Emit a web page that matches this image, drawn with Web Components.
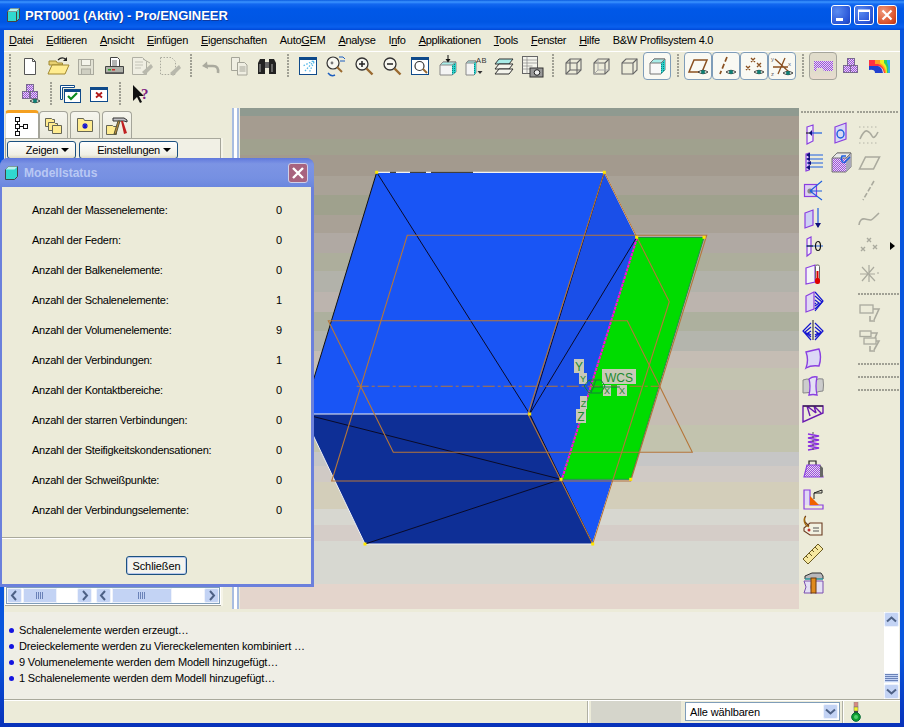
<!DOCTYPE html>
<html>
<head>
<meta charset="utf-8">
<title>Pro/ENGINEER</title>
<style>
  html, body { margin: 0; padding: 0; background: #ecebd9; }
  body { font: 11px "Liberation Sans", Arial, sans-serif; color: #000; }
</style>
</head>
<body>
<xp-window>
  <app-menubar>
    <menu-item><u>D</u>atei</menu-item>
    <menu-item><u>E</u>ditieren</menu-item>
    <menu-item><u>A</u>nsicht</menu-item>
    <menu-item><u>E</u>infügen</menu-item>
    <menu-item><u>E</u>igenschaften</menu-item>
    <menu-item>Auto<u>G</u>EM</menu-item>
    <menu-item><u>A</u>nalyse</menu-item>
    <menu-item>I<u>n</u>fo</menu-item>
    <menu-item><u>A</u>pplikationen</menu-item>
    <menu-item><u>T</u>ools</menu-item>
    <menu-item><u>F</u>enster</menu-item>
    <menu-item><u>H</u>ilfe</menu-item>
    <menu-item>B&amp;W Profilsystem 4.0</menu-item>
  </app-menubar>
  <tool-area>
    <tool-row>
      <tool-grip></tool-grip>
      <tool-btn icon="new"></tool-btn><tool-btn icon="open"></tool-btn><tool-btn icon="save"></tool-btn><tool-btn icon="print"></tool-btn><tool-btn icon="dis1"></tool-btn><tool-btn icon="dis2"></tool-btn>
      <tool-grip></tool-grip>
      <tool-btn icon="undo"></tool-btn><tool-btn icon="copy"></tool-btn><tool-btn icon="binoc"></tool-btn>
      <tool-grip></tool-grip>
      <tool-btn icon="repaint"></tool-btn><tool-btn icon="orient"></tool-btn><tool-btn icon="zoomin"></tool-btn><tool-btn icon="zoomout"></tool-btn><tool-btn icon="refit"></tool-btn><tool-btn icon="boxarrow"></tool-btn><tool-btn icon="boxab"></tool-btn><tool-btn icon="layers"></tool-btn><tool-btn icon="camera"></tool-btn>
      <tool-grip></tool-grip>
      <tool-btn icon="wire1"></tool-btn><tool-btn icon="wire2"></tool-btn><tool-btn icon="wire3"></tool-btn><tool-btn icon="shade" state="on"></tool-btn>
      <tool-grip></tool-grip>
      <tool-btn icon="planeeye" state="on"></tool-btn><tool-btn icon="axiseye" state="on"></tool-btn><tool-btn icon="pointeye" state="on"></tool-btn><tool-btn icon="csyseye" state="on"></tool-btn>
      <tool-grip></tool-grip>
      <tool-btn icon="mech" state="down"></tool-btn><tool-btn icon="blocks"></tool-btn><tool-btn icon="fringe"></tool-btn>
    </tool-row>
    <tool-row>
      <tool-grip></tool-grip>
      <tool-btn icon="blockseye"></tool-btn>
      <tool-grip></tool-grip>
      <tool-btn icon="wincheck"></tool-btn><tool-btn icon="winx"></tool-btn>
      <tool-grip></tool-grip>
      <tool-btn icon="whatsthis"></tool-btn>
    </tool-row>
  </tool-area>
  <main-row>
    <model-tree></model-tree>
    <pane-splitter></pane-splitter>
    <model-canvas></model-canvas>
    <side-tools></side-tools>
  </main-row>
  <message-log>
    <log-line>Schalenelemente werden erzeugt…</log-line>
    <log-line>Dreieckelemente werden zu Viereckelementen kombiniert …</log-line>
    <log-line>9 Volumenelemente werden dem Modell hinzugefügt…</log-line>
    <log-line>1 Schalenelemente werden dem Modell hinzugefügt…</log-line>
  </message-log>
  <status-bar></status-bar>
  <model-status slot="over" title-text="Modellstatus">
    <status-row label="Anzahl der Massenelemente:" value="0"></status-row>
    <status-row label="Anzahl der Federn:" value="0"></status-row>
    <status-row label="Anzahl der Balkenelemente:" value="0"></status-row>
    <status-row label="Anzahl der Schalenelemente:" value="1"></status-row>
    <status-row label="Anzahl der Volumenelemente:" value="9"></status-row>
    <status-row label="Anzahl der Verbindungen:" value="1"></status-row>
    <status-row label="Anzahl der Kontaktbereiche:" value="0"></status-row>
    <status-row label="Anzahl der starren Verbindungen:" value="0"></status-row>
    <status-row label="Anzahl der Steifigkeitskondensationen:" value="0"></status-row>
    <status-row label="Anzahl der Schweißpunkte:" value="0"></status-row>
    <status-row label="Anzahl der Verbindungselemente:" value="0"></status-row>
  </model-status>
</xp-window>

<script>
// shared bits for the little icons
const DEFS = `<defs>
  <pattern id="pd" width="2" height="2" patternUnits="userSpaceOnUse"><rect width="2" height="2" fill="#e6d8f4"/><rect width="1" height="1" fill="#9b4fd8"/><rect x="1" y="1" width="1" height="1" fill="#9b4fd8"/></pattern>
  <pattern id="td" width="2" height="2" patternUnits="userSpaceOnUse"><rect width="2" height="2" fill="#2fd0c8"/><rect width="1" height="1" fill="#0a7f80"/></pattern>
</defs>`;
const eye = (x, y) => `<g transform="translate(${x} ${y})"><path d="M-5 0Q0-3.5 5 0Q0 3.5-5 0z" fill="#dfe8e0" stroke="#222" stroke-width=".8"/><circle r="2" fill="#0d7d72"/></g>`;
const pblock = (x, y) => `<rect x="${x}" y="${y}" width="7" height="7" fill="url(#pd)" stroke="#7a6a90"/>`;
const mag = (c) => `<circle cx="10" cy="10" r="6" fill="#f7f7f0" stroke="#333" stroke-width="1.3"/>${c}<path d="M14.5 14.5l6 6" stroke="#9a6a30" stroke-width="2.4"/>`;
const winf = (x, y, w, h) => `<rect x="${x}" y="${y}" width="${w}" height="${h}" fill="#fff" stroke="#0f4a8a"/><rect x="${x}" y="${y}" width="${w}" height="2.5" fill="#0f4a8a"/>`;
const wire = (b) => `<path d="M5 9l4-4h11v11l-4 4H5z" fill="none" stroke="#666" stroke-width="1.1"/><path d="M5 9h11v11M16 9l4-4" fill="none" stroke="#666" stroke-width="1.1"/>${b}`;
const gr = `fill="none" stroke="#aaaa9e" stroke-width="1.6"`;

const ICONS = {
  new: `<path d="M6.5 4.500h8l3 3v13h-11z" fill="#fff" stroke="#555"/><path d="M14.500 4.500v3h3" fill="none" stroke="#555"/>`,
  open: `<path d="M3 11V7h7l1.500 2h5v2z" fill="#e8d070" stroke="#a08830"/><path d="M2 20l4-9h17l-4 9z" fill="#ffec90" stroke="#a08830"/><path d="M12 6q4-4 8-.5" fill="none" stroke="#222" stroke-width="1.200"/><path d="M21 3v4h-4z" fill="#222"/>`,
  save: `<rect x="4.500" y="5.500" width="15" height="15" fill="#e2e2d4" stroke="#aaaa9e"/><rect x="7.500" y="5.500" width="9" height="6" fill="#f4f4ea" stroke="#aaaa9e"/><rect x="7.500" y="15" width="9" height="5.500" fill="#cfcfc2" stroke="#aaaa9e"/>`,
  print: `<path d="M8.500 3.500h7l2 2v8h-9z" fill="#fff" stroke="#444"/><path d="M10 7h5M10 9h5M10 11h5" stroke="#666"/><path d="M3.500 12.500h18v7h-18z" fill="#aeb0a8" stroke="#444"/><rect x="6" y="15" width="3" height="1.500" fill="#2aa02a"/><rect x="10" y="15" width="3" height="1.500" fill="#d02a2a"/><rect x="4" y="18" width="17" height="1.500" fill="#666"/>`,
  dis1: `<path d="M2.500 3.500h10l4 4v13h-14z" fill="#efeee2" stroke="#b0b0a4"/><path d="M5 8h8M5 11h8M5 14h6" stroke="#c4c4b8"/><path d="M12 18l9-8 2 3-8 8z" fill="#b8b8ac"/><path d="M13 5l7 4" stroke="#b0b0a4"/>`,
  dis2: `<path d="M2.500 3.500h11l4 4v13h-15z" fill="none" stroke="#aaaa9e" stroke-dasharray="1.500 1.500"/><path d="M12 19l9-8 2 3-8 8z" fill="#b8b8ac"/>`,
  undo: `<path d="M8 7.500l-5 4.500 6 3z" fill="#aaaa9e"/><path d="M6 12h8q6 0 5 7" fill="none" stroke="#aaaa9e" stroke-width="2.600"/>`,
  copy: `<path d="M4.500 3.500h8v13h-8z" fill="#efeee2" stroke="#a5a599"/><path d="M10.500 8.500h7l2.500 2.500v10h-9.500z" fill="#efeee2" stroke="#a5a599"/><path d="M12.500 13h6M12.500 15h6M12.500 17h6" stroke="#a5a599"/>`,
  binoc: `<path d="M3 20V9l2-4h5v15zM14 20V5h5l2 4v11z" fill="#222"/><rect x="10" y="8" width="4" height="6" fill="#666"/><path d="M5 10v8M17 10v8" stroke="#aaa"/>`,
  repaint: `<rect x="3.500" y="3.500" width="17" height="17" fill="#fff" stroke="#0f4a8a"/><rect x="3.500" y="3.500" width="17" height="2.500" fill="#0f4a8a"/><path d="M18 7L9 17M18 8l-5 11M17 7L7 12" stroke="#55b8e8" stroke-width="1.300" stroke-dasharray="1.500 1.500"/>`,
  orient: `<circle cx="9" cy="9" r="6" fill="#f7f7f0" stroke="#333" stroke-width="1.200"/><path d="M13 13l5 5" stroke="#9a6a30" stroke-width="2"/><path d="M4 19q3 4 7 2" fill="none" stroke="#1d5fc0" stroke-width="1.400"/><path d="M15 3q5-1 6 2M16 7h5" fill="none" stroke="#1d5fc0"/><circle cx="8" cy="9" r="1.400" fill="#777"/>`,
  zoomin: mag(`<path d="M7 10h6M10 7v6" stroke="#222" stroke-width="1.500"/>`),
  zoomout: mag(`<path d="M7 10h6" stroke="#222" stroke-width="1.500"/>`),
  refit: `<rect x="3.500" y="3.500" width="17" height="17" fill="#fff" stroke="#0f4a8a"/><rect x="3.500" y="3.500" width="17" height="2.500" fill="#0f4a8a"/><circle cx="11.500" cy="12" r="4.500" fill="#fff" stroke="#333" stroke-width="1.200"/><path d="M15 15l4 4" stroke="#9a6a30" stroke-width="2"/>`,
  boxarrow: `<path d="M4 11l3-3h13v10l-4 3H4z" fill="#f4f4f4" stroke="#888"/><path d="M16 11v10l4-3V8z" fill="url(#td)"/><path d="M4 11l3-3h13l-4 3z" fill="#a8ece8" stroke="#888"/><path d="M12 1v6" stroke="#111"/><path d="M9.500 5h5L12 8.500z" fill="#111"/>`,
  boxab: `<path d="M2 9l2-2h8v12l-2 2H2z" fill="#f4f4f4" stroke="#888"/><path d="M10 9l2-2v12l-2 2z" fill="url(#td)"/><path d="M2 9l2-2h8l-2 2z" fill="#a8ece8" stroke="#888"/><text x="12" y="8.500" font-family="Liberation Sans" font-size="7.500" letter-spacing=".5" fill="#333">AB</text><path d="M13.500 17h5l-2.500 3z" fill="#333"/>`,
  layers: `<path d="M7 5h14l-4 5H3z" fill="#a8ece8" stroke="#333"/><path d="M7 10h14l-4 5H3z" fill="#f4f4ec" stroke="#333"/><path d="M7 15h14l-4 5H3z" fill="#f4f4ec" stroke="#333"/>`,
  camera: `<rect x="2.500" y="2.500" width="15" height="17" fill="#f4f4ec" stroke="#666"/><path d="M2.500 6h15M2.500 9h15M2.500 12h10M2.500 15h8M7 2.500v17" stroke="#888" stroke-width=".7"/><rect x="10" y="14" width="13" height="9" fill="#999" stroke="#333"/><circle cx="17" cy="18.500" r="2.800" fill="#eee" stroke="#222"/>`,
  wire1: wire(`<path d="M9 5v11H20M9 16l-4 4" fill="none" stroke="#666" stroke-width="1.100"/>`),
  wire2: wire(`<path d="M9 5v11H20M9 16l-4 4" fill="none" stroke="#aaa" stroke-width="1"/>`),
  wire3: wire(``),
  shade: `<path d="M5 9l4-4h11v11l-4 4H5z" fill="#f8f8f8" stroke="#777"/><path d="M16 9v11l4-4V5z" fill="url(#td)"/><path d="M5 9l4-4h11l-4 4z" fill="#a8ece8" stroke="#777"/>`,
  planeeye: `<path d="M3 18L8 6h13l-5 12z" fill="none" stroke="#8a5020" stroke-width="1.500"/>${eye(17,18)}`,
  axiseye: `<path d="M13 3l-7 17" stroke="#8a5020" stroke-width="1.700" stroke-dasharray="5 2.500"/>${eye(17,18)}`,
  pointeye: `<path d="M9 4l4 4m0-4l-4 4M15 9l4 4m0-4l-4 4M4 12l4 4m0-4l-4 4" stroke="#8a5020" stroke-width="1.300"/>${eye(17,18)}`,
  csyseye: `<path d="M5 5l14 13M15 4L8 20M3 13h15" stroke="#8a5020" stroke-width="1.300"/><text x="1" y="7" font-size="6" font-family="Liberation Sans" fill="#666">y</text><text x="1" y="22" font-size="6" font-family="Liberation Sans" fill="#666">z</text><text x="18" y="12" font-size="6" font-family="Liberation Sans" fill="#666">x</text>${eye(18,19)}`,
  mech: `<path d="M3 7h19v10h-9l-2-3H6l-1 3H3z" fill="url(#pd)"/>`,
  blocks: `${pblock(8.500,4.500)}${pblock(4.500,11.500)}${pblock(11.500,11.500)}`,
  fringe: `<path d="M2 6h21v13h-6q-1-6-6-7H2z" fill="#ff3040"/><path d="M8 6h15v13h-5q-1-7-7-9H8z" fill="#ffa020"/><path d="M13 6h10v13h-4q0-7-6-10z" fill="#f0f020"/><path d="M17 6h6v13h-3q0-8-3-10z" fill="#30d060"/><path d="M20 6h3v13h-2q1-8-1-10z" fill="#30b0f0"/><path d="M2 12h9q4 1 5 7H8q0-4-6-3z" fill="#2040d0"/>`,
  blockseye: `${pblock(8.500,2.500)}${pblock(4.500,9.500)}${pblock(12.500,9.500)}${eye(17,19)}`,
  wincheck: `<path d="M1.500 3.500h14v2h-12v12h-2z" fill="#fff" stroke="#0f4a8a"/>${winf(5.500,7.500,16,13)}<path d="M9 14l3 3 6-6" fill="none" stroke="#0d8a20" stroke-width="2.200"/>`,
  winx: `${winf(3.500,5.500,17,14)}<path d="M9 10.500l6 5m0-5l-6 5" stroke="#b01818" stroke-width="1.800"/>`,
  whatsthis: `<path d="M5 3v16l4-4 3 6 2-1-3-6h5z" fill="#111"/><text x="13" y="17" font-family="Liberation Serif" font-weight="700" font-size="15" fill="#7d1a80">?</text>`,

  // left column of the right hand bar
  load: `<path d="M6 5l6-2v16l-6 3z" fill="#f0eef6" stroke="#8a3fe0" stroke-width="1.200"/><path d="M9 11h12" stroke="#1d5fe0" stroke-width="1.200"/><path d="M5 11h5" stroke="#111"/><path d="M11 8v6l-3-3z" fill="#10107a"/>`,
  bearing: `<path d="M6 5l11-4v16L6 21z" fill="#d8d8f4" stroke="#8a3fe0" stroke-width="1.200"/><ellipse cx="11.500" cy="12" rx="3.500" ry="4" fill="none" stroke="#1d5fe0" stroke-width="1.400"/>`,
  pressure: `<path d="M5 4l3-1v17l-3 1z" fill="#e0d8f4" stroke="#8a3fe0" stroke-width="1.200"/><path d="M6 5h16M6 9h16M6 13h16M6 17h16" stroke="#1d5fe0"/><path d="M9 2.500v5L5 5zM9 7v4l-4-2zM10 11v4l-4-2zM9 15v5l-4-2.500z" fill="#10107a"/>`,
  cubehole: `<path d="M3 8l5-5h14v14l-5 5H3z" fill="url(#pd)" stroke="#777"/><path d="M17 8v14l5-5V3z" fill="#a8a8b8"/><path d="M3 8l5-5h14l-5 5z" fill="#e8e8e8" stroke="#777"/><path d="M17 6h-4a2.500 4 0 1 0 4 5l4-4" fill="none" stroke="#1d5fe0" stroke-width="1.500"/>`,
  cone: `<rect x="3.500" y="6.500" width="12" height="12" fill="#ddd0f0" stroke="#8a3fe0" stroke-width="1.200"/><circle cx="9" cy="13" r="2.600" fill="#888"/><path d="M9 13L21 3M9 13l12 9M9 13h12" stroke="#1d5fe0" stroke-width="1.100"/>`,
  accel: `<path d="M4 7l8-3v15l-8 3z" fill="#cdd0f4" stroke="#8a3fe0" stroke-width="1.200"/><path d="M17 2v19" stroke="#1d5fe0" stroke-width="1.200"/><path d="M14 17h6l-3 5z" fill="#10107a"/>`,
  theta: `<path d="M6 5l4-2v16l-4 3z" fill="#f0eef6" stroke="#8a3fe0" stroke-width="1.200"/><path d="M5 12h17" stroke="#1d5fe0"/><path d="M6 12h6" stroke="#111"/><ellipse cx="17" cy="12" rx="2.500" ry="4.500" fill="none" stroke="#111" stroke-width="1.200"/>`,
  thermo: `<path d="M5 6l9-3v17l-9 2z" fill="#f4f4f8" stroke="#8a3fe0" stroke-width="1.200"/><rect x="14.500" y="3" width="4" height="15" rx="1.500" fill="#fff" stroke="#666"/><rect x="15.500" y="9" width="2" height="9" fill="#d00"/><rect x="14" y="16" width="5" height="6" rx="2" fill="#d00"/>`,
  hatch: `<path d="M5 6l8-4v17l-8 3z" fill="#e0d8f4" stroke="#8a3fe0" stroke-width="1.200"/><path d="M14 2l8 9-8 10" fill="none" stroke="#1414d0" stroke-width="1.200"/><path d="M14 6l7 6-7 7M14 10l4 3-4 3M14 13l1 1" fill="none" stroke="#1414d0" stroke-width="1.200"/>`,
  hatch2: `<path d="M12 2v20" stroke="#222"/><path d="M10 5L2 13l8 9M10 9l-6 5 6 5M10 13l-3 2 3 2" fill="none" stroke="#1414d0" stroke-width="1.200"/><path d="M14 5l8 8-8 9M14 9l6 5-6 5M14 13l3 2-3 2" fill="none" stroke="#1414d0" stroke-width="1.200"/>`,
  surf: `<path d="M5 6q8-2 13-3 3 8 0 17-8-1-13 2 3-8 0-16z" fill="#dcd8f6" stroke="#8a3fe0" stroke-width="1.400"/>`,
  surfs: `<path d="M14 6q4-2 8-1 1 6 0 12-4 0-8 2z" fill="#ccc" stroke="#888"/><path d="M2 6q4-2 8 0 1 6 0 12-4 1-8 1z" fill="#ccc" stroke="#888"/><path d="M8 5q4-3 8-2-2 9 0 18-4-1-8 0 2-9 0-16z" fill="#e4e0f4" stroke="#8a3fe0" stroke-width="1.300"/>`,
  truss: `<path d="M2 4h20v7L2 20zM6 4l3 10M6 4l9 7M13 4l2 7M13 4l7 7" fill="none" stroke="#6a1ab0" stroke-width="1.400"/><path d="M2 4h20" stroke="#222"/>`,
  spring: `<path d="M7 4l11 2-11 2 11 2-11 2 11 2-11 2 11 2-11 2" fill="none" stroke="#8a2fe0" stroke-width="1.400"/><path d="M12 2v20" stroke="#555" stroke-dasharray="2 2"/>`,
  weight: `<path d="M8 7V3h7v4" fill="none" stroke="#222" stroke-width="1.200"/><path d="M6 7h13l3 12H3z" fill="url(#pd)" stroke="#8a3fe0" stroke-width="1.200"/><path d="M19 7l3 3v9h-3z" fill="#666"/>`,
  weld: `<rect x="3" y="4" width="6" height="15" fill="#e0d8f4"/><path d="M3 4h6v15h13v4H3z" fill="none" stroke="#8a3fe0" stroke-width="1.200"/><path d="M9 19v-9l9 9z" fill="#f06000"/><path d="M13 13V7l8-3v3h-8" fill="none" stroke="#222"/>`,
  tag: `<path d="M8 12L4 8q-1-5 1-6M21 9v12H9l-6-4v-3l6-5z" fill="#f2f2e2" stroke="#6a3a20" stroke-width="1.100"/><path d="M4 3q-2 4 1 8l3 2" fill="none" stroke="#a06a10" stroke-width="1.400"/><circle cx="8" cy="16" r="1.500" fill="#c03030"/><path d="M12 14h6M12 17h6" stroke="#555"/>`,
  ruler: `<path d="M2 17L17 2l5 5L7 22z" fill="#f6e8a0" stroke="#6a5a20"/><path d="M5 14l2 2M8 11l3 3M11 8l2 2M14 5l3 3" stroke="#6a5a20"/>`,
  hammer: `<path d="M3 11h8l-1 6 1 6H3l2-6zM14 11h8v12h-8z" fill="#e4e0f4" stroke="#7a4fb0"/><path d="M4 6l7-3h9l2 3v3H4z" fill="#b8b8bc" stroke="#333"/><path d="M4 9h18" stroke="#20c0d0"/><rect x="10" y="8" width="5" height="15" fill="#e08a20" stroke="#6a3a10"/>`,

  // greyed out column
  gcurve: `<path d="M3 17q4-9 7-8t5 5 6-4" ${gr}/><path d="M2 5h20M2 21h20" fill="none" stroke="#b4b4a8" stroke-dasharray="1.500 2.500"/>`,
  gplane: `<path d="M2.500 19l6-12h14l-6 12z" ${gr}/>`,
  gline: `<path d="M17 3L6 22" ${gr} stroke-dasharray="5 2"/>`,
  gspline: `<path d="M2 19q1-7 6-6t6 1 8-7" ${gr}/>`,
  gpoints: `<path d="M10 4l4 4m0-4l-4 4M16 11l4 4m0-4l-4 4M4 13l4 4m0-4l-4 4" fill="none" stroke="#aaaa9e" stroke-width="1.400"/>`,
  gstar: `<path d="M5 5l13 14M5 19L17 5M3 12h15M12 3v17" fill="none" stroke="#aaaa9e" stroke-width="1.200"/><path d="M21 10v2" stroke="#aaaa9e"/>`,
  grect: `<rect x="3" y="4" width="13" height="8" fill="none" stroke="#aaaa9e" stroke-width="1.300"/><path d="M16 8h6l-5 11" ${gr}/><path d="M13 15v5h5" ${gr}/>`,
  grect2: `<rect x="3" y="2" width="11" height="5.500" fill="none" stroke="#aaaa9e" stroke-width="1.300"/><rect x="7" y="9" width="12" height="6" fill="none" stroke="#aaaa9e" stroke-width="1.300"/><path d="M14 4h6l-2 5M19 12h3l-5 9" ${gr}/><path d="M13 17v5h5" ${gr}/>`
};

// all elements just render a string into an open shadow root
class Shadowed extends HTMLElement {
  constructor() {
    super();
    this.attachShadow({mode: 'open'});
  }
  connectedCallback() {
    this.shadowRoot.innerHTML = this.render();
  }
  render() { return '<slot></slot>'; }
}

class XpWindow extends Shadowed {
  render() {
    return `
      <style>
        :host { display: block; position: relative; width: 904px; height: 727px; overflow: hidden; }
        .frame { height: 100%; box-sizing: border-box; display: flex; flex-direction: column;
          background: linear-gradient(#0855dd, #0855dd 90%, #0831b9); padding: 0 4px 4px 4px; }
        .title { height: 30px; margin: 0 -4px; flex: none; display: flex; align-items: center; padding: 0 7px; box-sizing: border-box;
          background: linear-gradient(#0a5be0 0, #3b94ff 2px, #1368f0 4px, #0058e8 9px, #0056e4 22px, #0a60ee 27px, #0048d8 30px);
          color: #fff; font: bold 13px "Liberation Sans", Arial, sans-serif; }
        .title svg { flex: none; margin-right: 5px; }
        .caption { flex: 1; text-shadow: 1px 1px 0 #0f3aa0; letter-spacing: -.03px; }
        .ctl { width: 20px; height: 20px; margin-left: 3px; box-sizing: border-box; border: 1px solid #fff; border-radius: 3px;
          background: radial-gradient(circle at 30% 30%, #5b8cf0, #2a56d8 70%, #1c3fb0); position: relative; }
        .ctl.close { background: radial-gradient(circle at 30% 30%, #f09a7c, #d84f28 70%, #b83010); }
        .content { flex: 1; min-height: 0; display: flex; flex-direction: column; background: #ecebd9; }
      </style>
      <div class="frame">
        <div class="title">
          <svg width="13" height="14" viewBox="0 0 13 14"><path d="M.5 3.500l3-3h9v10l-3 3h-9z" fill="#30d8d0" stroke="#444"/><path d="M.5 3.500h9v10M9.500 3.500l3-3" fill="none" stroke="#444"/><path d="M.5 3.500l3-3h9l-3 3z" fill="#b8f4f0"/></svg>
          <span class="caption">PRT0001 (Aktiv) - Pro/ENGINEER</span>
          <div class="ctl"><svg width="18" height="18" viewBox="0 0 18 18"><rect x="4" y="12" width="7" height="3" fill="#fff"/></svg></div>
          <div class="ctl"><svg width="18" height="18" viewBox="0 0 18 18"><path d="M3.500 5h11v9.500h-11z" fill="none" stroke="#fff"/><rect x="3" y="3.500" width="12" height="2.500" fill="#fff"/></svg></div>
          <div class="ctl close"><svg width="18" height="18" viewBox="0 0 18 18"><path d="M4.500 4.500l9 9m0-9l-9 9" stroke="#fff" stroke-width="2.200"/></svg></div>
        </div>
        <div class="content"><slot></slot></div>
      </div>
      <slot name="over"></slot>`;
  }
}

class AppMenubar extends Shadowed {
  render() {
    return `<style>
      :host { display: flex; flex: none; height: 22px; box-sizing: border-box; align-items: center; gap: 13px; padding: 0 0 1px 5px;
        border-bottom: 1px solid #fff; background: #ecebd9; }
      </style><slot></slot>`;
  }
}

class MenuItem extends Shadowed {
  render() {
    return `<style>:host { display: block; font: 11px "Liberation Sans", Arial, sans-serif; letter-spacing: -.3px; white-space: nowrap; }</style><slot></slot>`;
  }
}

class ToolArea extends Shadowed {
  render() {
    return `<style>:host { display: block; flex: none; height: 56px; background: #ecebd9; }</style><slot></slot>`;
  }
}

class ToolRow extends Shadowed {
  render() {
    return `<style>:host { display: flex; height: 28px; align-items: center; }</style><slot></slot>`;
  }
}

class ToolGrip extends Shadowed {
  render() {
    return `<style>
      :host { display: flex; flex: none; width: 13px; height: 28px; justify-content: center; align-items: center; }
      :host(:first-child) { width: 12px; }
      i { display: block; width: 2px; height: 24px; background: repeating-linear-gradient(#a0a094 0 2px, transparent 2px 3px); }
      </style><i></i>`;
  }
}

class ToolBtn extends Shadowed {
  render() {
    const body = ICONS[this.getAttribute('icon')] || '';
    return `<style>
      :host { display: flex; flex: none; width: 28px; height: 28px; box-sizing: border-box; align-items: center; justify-content: center; }
      :host([state="on"]) { border: 1px solid #7f9db9; border-radius: 4px; background: #f9f9f3; }
      :host([state="down"]) { border: 1px solid #a5a59b; border-radius: 4px; background: linear-gradient(#e0dccb 70%, #eadcd0); }
      svg { display: block; }
      </style><svg width="24" height="24" viewBox="0 0 24 24">${DEFS}${body}</svg>`;
  }
}

class MainRow extends Shadowed {
  render() {
    return `<style>:host { display: flex; flex: none; height: 501px; margin-bottom: 3px; }</style><slot></slot>`;
  }
}

class ModelTree extends Shadowed {
  render() {
    return `<style>
      :host { display: flex; flex-direction: column; flex: none; width: 228px; box-sizing: border-box; padding: 2px 11px 3px 1px; }
      .tabs { display: flex; height: 28px; flex: none; align-items: flex-end; }
      .tab { width: 30px; height: 27px; margin-right: 2px; box-sizing: border-box; border: 1px solid #a5a59a; border-bottom: 0; border-radius: 4px 4px 0 0;
        background: linear-gradient(#f6f6ee, #e9e8da); display: flex; align-items: center; justify-content: center; }
      .tab.on { width: 34px; height: 28px; margin-right: 0; background: #fff; border-top: 3px solid #f4a020; border-left-color: #d8d8d0; }
      .tab.on + .tab { width: 29px; }
      .box { flex: 1; min-height: 0; display: flex; flex-direction: column; justify-content: space-between; border: 1px solid #a5a59a; border-top-color: #a8a89c;
        background: #f1f0e5; padding: 2px 0 1px; box-shadow: 2px 0 0 #f5f4e8; }
      .btns { display: flex; gap: 3px; padding-left: 1px; }
      .btn { height: 18px; box-sizing: border-box; border: 1px solid #1c5180; border-radius: 3px; display: flex; align-items: center; justify-content: flex-end; gap: 3px; padding-right: 6px;
        background: linear-gradient(#fff, #f0efe4 80%, #dcd8c4); letter-spacing: -.25px; }
      .btn i { width: 0; height: 0; border: 4px solid transparent; border-top: 4px solid #000; border-bottom: 0; }
      .scrolls { display: flex; border: 1px solid #7f9db9; outline: 1px solid #fff; gap: 4px; background: #fff; }
      .scrolls b { width: 1px; background: #1c5180; margin-left: -3px; }
      </style>
      <div class="tabs">
        <div class="tab on"><svg width="16" height="20" viewBox="0 0 16 20"><g fill="#fff" stroke="#111"><rect x="1.500" y="1.500" width="4" height="4"/><rect x="1.500" y="8.500" width="4" height="4"/><rect x="9.500" y="8.500" width="4" height="4"/><rect x="1.500" y="15.500" width="4" height="4"/></g><path d="M3.500 5.500v3M3.500 12.500v3M5.500 10.500h4" stroke="#111"/></svg></div>
        <div class="tab"><svg width="20" height="20" viewBox="0 0 20 20"><g fill="#ffec90" stroke="#665"><path d="M1.500 3.500h6l1 1h2v7h-9z"/><path d="M4.500 7.500h6l1 1h2v7h-9z"/><path d="M8.500 10.500h9v8h-9z"/></g></svg></div>
        <div class="tab"><svg width="18" height="18" viewBox="0 0 18 18"><path d="M1.500 2.500h6l1 2h8v11h-15z" fill="#ffec90" stroke="#665"/><path d="M9 7v6M6 10h6M7 8l4 4m0-4l-4 4" stroke="#1414d0" stroke-width="1.200"/></svg></div>
        <div class="tab"><svg width="24" height="24" viewBox="0 0 24 24"><path d="M1.500 12.500h6l1 1h3v8h-10z" fill="#ffec90" stroke="#665"/><path d="M8 5h11l3 2v2l-3-1H8z" fill="#c0c0c4" stroke="#333"/><path d="M13 8h2l-4 13h-2z" fill="#c08a40" stroke="#553"/><path d="M16 8h2l4 12-3 1z" fill="#c02020"/></svg></div>
      </div>
      <div class="box">
        <div class="btns">
          <div class="btn" style="width:69px"><span>Zeigen</span><i></i></div>
          <div class="btn" style="width:99px"><span>Einstellungen</span><i></i></div>
        </div>
        <div class="scrolls">
          <h-scroll style="width:85px" thumb="34" rest="16"></h-scroll>
          <h-scroll style="width:123px" thumb="60" rest="31"></h-scroll>
        </div>
      </div>`;
  }
}

class PaneSplitter extends Shadowed {
  render() {
    return `<style>
      :host { display: block; flex: none; width: 8px;
        background: linear-gradient(90deg, #a8bde0 0 2px, #fff 2px 5px, #a8bde0 5px 7px, #ecebd9 7px); }
      </style>`;
  }
}

const chevron = (d) => {
  const p = { l: 'M9 3L5 7.500 9 12', r: 'M6 3l4 4.500L6 12', u: 'M3 9.500l4.500-4 4.500 4', d: 'M3 5.500l4.500 4 4.500-4' }[d];
  return `<svg width="15" height="15" viewBox="0 0 15 15"><rect x=".5" y=".5" width="14" height="14" rx="1.500" fill="#c3d3f4" stroke="#eef2fb"/><path d="${p}" fill="none" stroke="#4d6185" stroke-width="2"/></svg>`;
};

class HScroll extends Shadowed {
  render() {
    const t = this.getAttribute('thumb');
    return `<style>
      :host { display: flex; height: 15px; flex: none; background: #fff; }
      svg { flex: none; display: block; }
      .thumb { width: ${t}px; margin-left: 1px; background: #c3d3f4; border: 1px solid #eef2fb; box-sizing: border-box; display: flex; justify-content: center; align-items: center; }
      .thumb i { width: 8px; height: 7px; background: repeating-linear-gradient(90deg, #6a82b8 0 1px, transparent 1px 2px); }
      .rest { flex: 1; }
      </style>${chevron('l')}<div class="thumb"><i></i></div><div class="rest"></div>${chevron('r')}`;
  }
}

const BANDS = [[108,'#8f9a90'],[116,'#a59c90'],[139,'#a0a18e'],[155,'#a39a8e'],[176,'#a9a297'],[195,'#9fa18d'],[215,'#a9a196'],[233,'#b0a9a3'],[253,'#adae9c'],[271,'#b2b2aa'],[292,'#bcb4ae'],[312,'#adb09e'],[331,'#b4b5ad'],[351,'#c5bdb4'],[368,'#c3c3b0'],[390,'#c5bdb3'],[425,'#c2c3ae'],[452,'#c6c6c6'],[466,'#d0cac5'],[482,'#d3ceba'],[509,'#d7d7d0'],[525,'#d5cdc8'],[541,'#d7d8d1'],[584,'#e4d5cc'],[609,'']];

class ModelCanvas extends Shadowed {
  render() {
    const bands = BANDS.slice(0, -1).map((b, i) =>
      `<rect x="240" y="${b[0]}" width="559" height="${BANDS[i + 1][0] - b[0]}" fill="${b[1]}"/>`).join('');
    const verts = [[376.7,172.3],[604.3,172.3],[636.7,237.3],[704,237.3],[529.7,414],[561,479.3],[630.7,479.3],[365,544],[592.7,544]]
      .map(v => `<rect x="${v[0]-1.5}" y="${v[1]-1.5}" width="3" height="3" fill="#ffe800"/>`).join('');
    const label = (x, y, w, h, t, size) =>
      `<rect x="${x}" y="${y}" width="${w}" height="${h}" fill="#c9c9b8"/><text x="${x + w / 2}" y="${y + h - 2}" text-anchor="middle" font-family="Liberation Sans" font-size="${size}" fill="#1c8a30">${t}</text>`;
    return `<style>
      :host { display: block; flex: none; width: 559px; height: 501px; }
      svg { display: block; }
      </style>
      <svg width="559" height="501" viewBox="240 108 559 501">
        ${bands}
        <path d="M376.7 172.3H604.3L636.7 237.3 561 479.3 613 480 592.7 544H365L303 414z" fill="#1955f5"/>
        <path d="M604.3 172.3L636.7 237.3 561 479.3 529.7 414z" fill="#1a4fe8"/>
        <path d="M303 414H529.7L561 479.3 592.7 544H365z" fill="#0e2f96"/>
        <path d="M636.7 237.3H704L630.7 479.3H561z" fill="#00dc00"/>
        <path d="M637 238L562 479" stroke="#ff00e0" stroke-width="2" stroke-dasharray="3 1" fill="none"/>
        <path d="M704 237.3L630.7 479.3" stroke="#2a8a4a" fill="none"/>
        <path d="M636.7 237.5H704M561 479.3H630.7" stroke="#1f8f40" fill="none"/>
        <path d="M303 414H529.7M376.7 172.3H604.3M604.3 172.3L636.7 237.3M365 544H592.7L613 480" fill="none" stroke="#f2f2f2" stroke-width="1.200"/>
        <path d="M376.7 172.3L303 414" stroke="#111" fill="none"/>
        <path d="M390 172.300h6M410 172.300h16M431 172.300h42" stroke="#111" fill="none"/>
        <path d="M303 414L365 544" stroke="#f2f2f2" fill="none"/>
        <path d="M376.7 172.3L529.7 414M604.3 172.3L529.7 414M636.7 237.3L529.7 414M314 416.7L561 479.3M365 544L561 479.3M529.7 414L592.7 544" fill="none" stroke="#0a0a28"/>
        <g fill="none" stroke="#b5763a" stroke-width="1.100">
          <path d="M407.3 235.3H706.700L630.7 481H331.700z"/>
          <path d="M328.3 320.700H627.300L692.300 452.300H393.300z"/>
          <path d="M604.3 172.3L669.300 301.700 592.7 544 528 414z"/>
          <path d="M356.7 386.300H660" stroke-dasharray="12 3 3 3"/>
        </g>
        ${label(574,359,10,14,'Y',12)}
        ${label(579,373,8,11,'Y',9)}
        ${label(602,369,34,15,'WCS',12)}
        ${label(603,385,8,11,'X',9)}
        ${label(617,385,10,11,'X',9)}
        ${label(580,396,7,13,'Z',9)}
        ${label(576,409,10,14,'Z',12)}
        <g fill="none" stroke="#15803a" stroke-width="1">
          <path d="M584 386l5-6h12l4 6-4 7h-12zM589 380l5 7h11M594 387l-5 6M596 380l-5 13M605 387h15"/>
        </g>
        ${verts}
      </svg>`;
  }
}

class SideTools extends Shadowed {
  render() {
    const btn = n => `<tool-btn icon="${n}"></tool-btn>`;
    return `<style>
      :host { display: flex; flex-direction: column; flex: none; width: 101px; box-sizing: border-box; background: #ecebd9; padding-top: 3px; }
      .grips { display: flex; height: 9px; padding-left: 2px; gap: 3px; }
      .grips i, .dots { display: block; height: 2px; background: repeating-linear-gradient(90deg, #a0a094 0 2px, transparent 2px 3px); }
      .cols { display: flex; }
      .col { width: 28px; display: flex; flex-direction: column; }
      .wide { width: 45px; }
      .row { display: flex; align-items: center; }
      .arrow { width: 0; height: 0; margin-left: 7px; border: 4px solid transparent; border-left: 5px solid #000; border-right: 0; }
      .dots { margin: 5px 0 4px 3px; }
      </style>
      <div class="grips"><i style="width:53px"></i><i style="width:42px"></i></div>
      <div class="cols">
        <div class="col">${['load','pressure','cone','accel','theta','thermo','hatch','hatch2','surf','surfs','truss','spring','weight','weld','tag','ruler','hammer'].map(btn).join('')}</div>
        <div class="col">${['bearing','cubehole'].map(btn).join('')}</div>
        <div class="col wide">
          ${btn('gcurve')}${btn('gplane')}${btn('gline')}${btn('gspline')}
          <div class="row">${btn('gpoints')}<div class="arrow"></div></div>
          ${btn('gstar')}
          <div class="dots"></div>
          ${btn('grect')}${btn('grect2')}
          <div class="dots" style="margin-top:8px;margin-bottom:11px"></div>
          <div class="dots" style="margin-top:0;margin-bottom:11px"></div>
          <div class="dots" style="margin-top:0"></div>
        </div>
      </div>`;
  }
}

class MessageLog extends Shadowed {
  render() {
    return `<style>
      :host { display: flex; flex: none; height: 87px; background: #efeee6; box-sizing: border-box; }
      .lines { flex: 1; padding: 10px 0 0 5px; }
      .bar { width: 15px; flex: none; margin-right: 1px; display: flex; flex-direction: column; background: #fff; }
      .bar svg { display: block; flex: none; }
      .fill { flex: 1; }
      .thumb { height: 10px; flex: none; margin-bottom: 1px; background: repeating-linear-gradient(#6a82b8 0 1px, #c3d3f4 1px 2px); border: 1px solid #eef2fb; box-sizing: border-box; }
      </style>
      <div class="lines"><slot></slot></div>
      <div class="bar">${chevron('u')}<div class="fill"></div><div class="thumb"></div>${chevron('d')}</div>`;
  }
}

class LogLine extends Shadowed {
  render() {
    return `<style>
      :host { display: flex; height: 16px; align-items: center; font: 11px "Liberation Sans", Arial, sans-serif; letter-spacing: -.17px; white-space: nowrap; }
      i { width: 5px; height: 5px; border-radius: 50%; background: #1414e0; margin-right: 5px; flex: none; }
      </style><i></i><slot></slot>`;
  }
}

class StatusBar extends Shadowed {
  render() {
    return `<style>
      :host { display: flex; flex: 1; min-height: 0; box-sizing: border-box; border-top: 1px solid #a9a99c; box-shadow: inset 0 1px 0 #fff; align-items: center; padding-left: 583px; background: #ecebd9; }
      .sep { width: 2px; height: 22px; flex: none; background: linear-gradient(90deg, #b0b0a4 1px, #fff 1px); }
      .msg { width: 90px; height: 22px; margin: 1px 4px 0 2px; background: #d5d5cb; flex: none; }
      .combo { width: 155px; height: 19px; box-sizing: border-box; border: 1px solid #7f9db9; background: #fff; display: flex; align-items: center; justify-content: space-between; padding-left: 4px; font: 11px "Liberation Sans", Arial, sans-serif; letter-spacing: -.15px; flex: none; }
      .combo svg { display: block; margin-right: 1px; }
      .light { margin-left: 7px; }
      </style>
      <div class="sep"></div><div class="msg"></div>
      <div class="combo"><span>Alle wählbaren</span>${chevron('d')}</div>
      <div class="sep" style="margin-left:2px"></div>
      <svg class="light" width="10" height="20" viewBox="0 0 10 20">
        <rect x="3" y="0" width="4" height="5" fill="#d88a80" stroke="#888" stroke-width=".5"/><rect x="3" y="5" width="4" height="4" fill="#f4f430" stroke="#666" stroke-width=".5"/><rect x="3" y="9" width="4" height="3" fill="#444"/>
        <circle cx="5" cy="15" r="4.300" fill="#10a030" stroke="#063"/><circle cx="5" cy="15" r="2" fill="#50d070"/>
      </svg>`;
  }
}

class ModelStatus extends Shadowed {
  render() {
    return `<style>
      :host { display: flex; flex-direction: column; position: absolute; left: 0; top: 158px; width: 314px; height: 429px; box-sizing: border-box;
        background: #6b80dc; border-radius: 8px 8px 0 0; padding: 0 3px 3px 2px; }
      .head { height: 29px; flex: none; display: flex; align-items: center; padding: 0 0 0 5px;
        background: linear-gradient(#6078dc, #7c94e4 20%, #7690e2 70%, #6a86de); margin: 0 -3px 0 -2px; border-radius: 8px 8px 0 0; }
      .head svg { flex: none; }
      .cap { flex: 1; margin-left: 6px; font: bold 12px "Liberation Sans", Arial, sans-serif; color: #b9c8f4; }
      .x { width: 20px; height: 20px; margin-right: 6px; border: 1px solid #d0cfe8; border-radius: 3px; background: #a8637f; box-sizing: border-box; }
      .x svg { display: block; }
      .body { flex: 1; min-height: 0; background: #ecebd9; display: flex; flex-direction: column; }
      .rows { flex: none; padding: 8px 0 0 30px; height: 350px; box-sizing: border-box; }
      .foot { flex: 1; border-top: 1px solid #a9a99c; box-shadow: inset 0 1px 0 #fff; display: flex; justify-content: center; padding-top: 18px; box-sizing: border-box; }
      .close { width: 61px; height: 19px; box-sizing: border-box; border: 1px solid #1c5180; border-radius: 3px; box-shadow: inset 0 0 0 1px #b8c8ec; background: #f4f4ee; display: flex; align-items: center; justify-content: center; font: 11px "Liberation Sans", Arial, sans-serif; letter-spacing: -.1px; }
      </style>
      <div class="head">
        <svg width="13" height="14" viewBox="0 0 13 14"><path d="M.5 3.500l3-3h9v10l-3 3h-9z" fill="#30d8d0" stroke="#444"/><path d="M.5 3.500l3-3h9l-3 3z" fill="#b8f4f0"/></svg>
        <span class="cap">${this.getAttribute('title-text')}</span>
        <div class="x"><svg width="18" height="18" viewBox="0 0 18 18"><path d="M4 4l10 10m0-10L4 14" stroke="#fff" stroke-width="2.400"/></svg></div>
      </div>
      <div class="body">
        <div class="rows"><slot></slot></div>
        <div class="foot"><div class="close">Schließen</div></div>
      </div>`;
  }
}

class StatusRow extends Shadowed {
  render() {
    return `<style>
      :host { display: flex; height: 30px; align-items: center; font: 11px "Liberation Sans", Arial, sans-serif; letter-spacing: -.27px; white-space: nowrap; }
      .l { width: 244px; flex: none; }
      </style><span class="l">${this.getAttribute('label')}</span><span>${this.getAttribute('value')}</span>`;
  }
}

window.customElements.define('xp-window', XpWindow);
window.customElements.define('app-menubar', AppMenubar);
window.customElements.define('menu-item', MenuItem);
window.customElements.define('tool-area', ToolArea);
window.customElements.define('tool-row', ToolRow);
window.customElements.define('tool-grip', ToolGrip);
window.customElements.define('tool-btn', ToolBtn);
window.customElements.define('main-row', MainRow);
window.customElements.define('model-tree', ModelTree);
window.customElements.define('pane-splitter', PaneSplitter);
window.customElements.define('h-scroll', HScroll);
window.customElements.define('model-canvas', ModelCanvas);
window.customElements.define('side-tools', SideTools);
window.customElements.define('message-log', MessageLog);
window.customElements.define('log-line', LogLine);
window.customElements.define('status-bar', StatusBar);
window.customElements.define('model-status', ModelStatus);
window.customElements.define('status-row', StatusRow);
</script>
</body>
</html>
